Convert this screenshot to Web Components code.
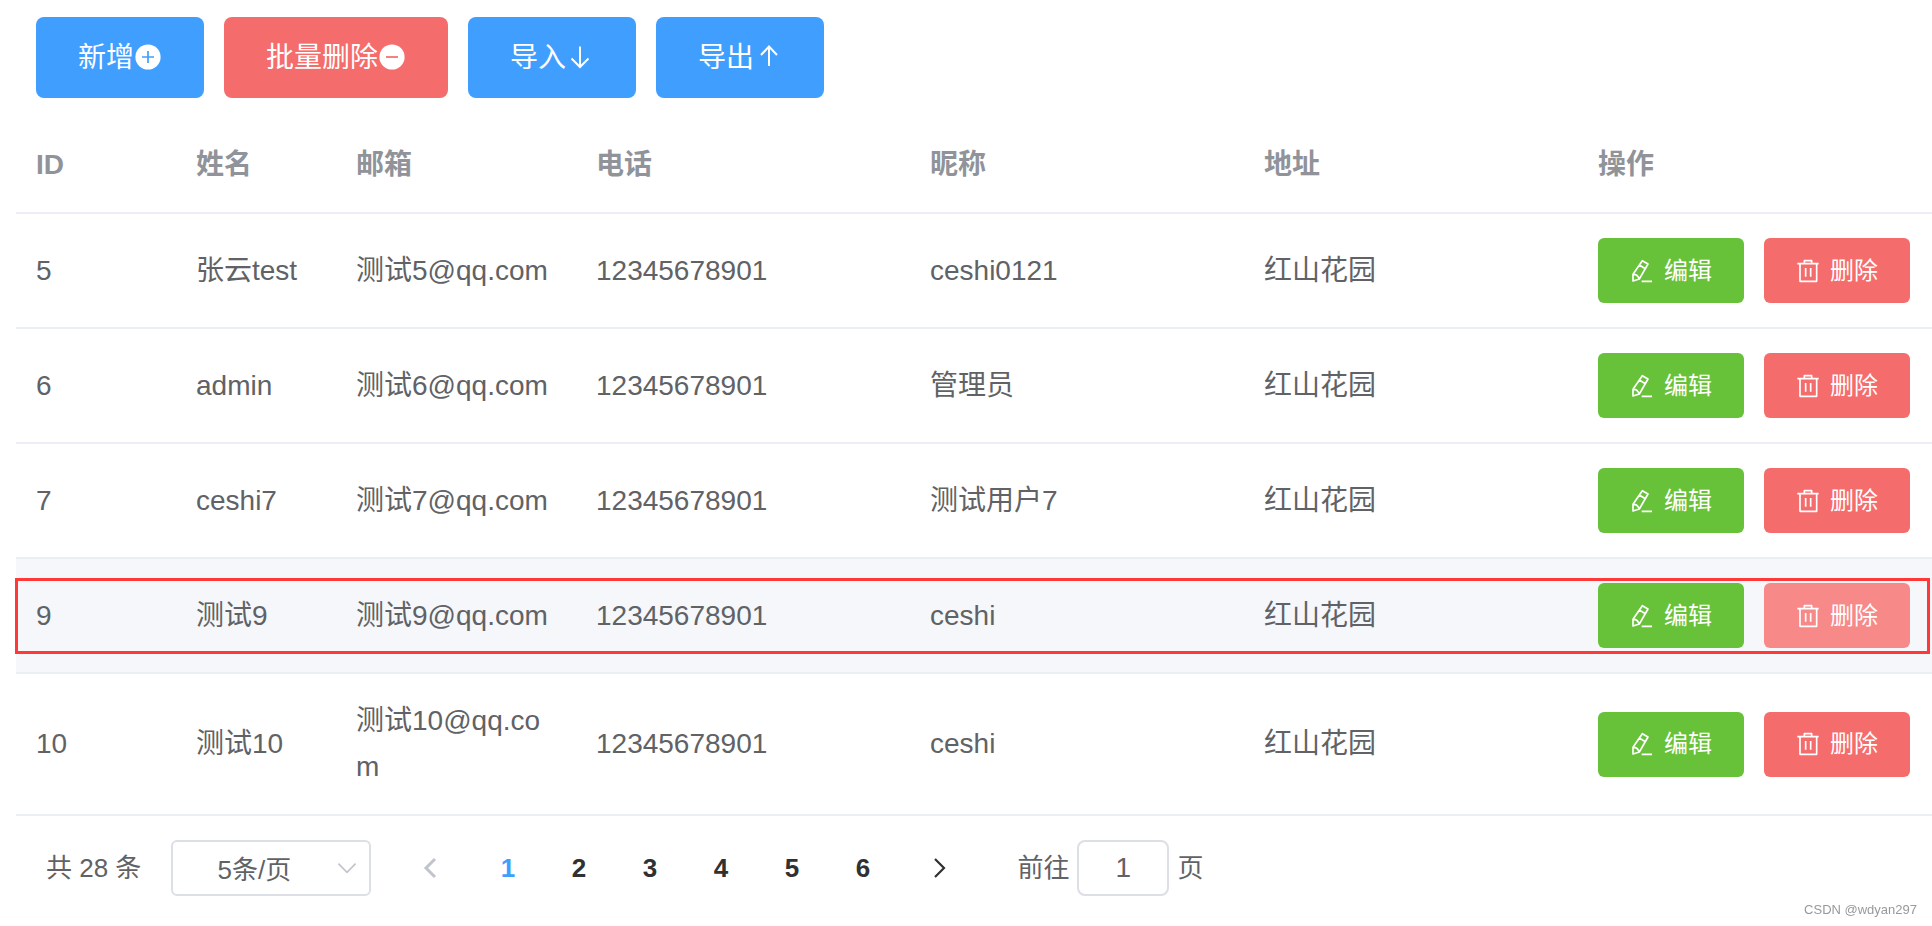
<!DOCTYPE html>
<html lang="zh-CN">
<head>
<meta charset="utf-8">
<meta name="viewport" content="width=device-width, initial-scale=1">
<title>用户管理</title>
<style>
  body {
    margin: 0;
    background: #fff;
    color: #606266;
    font-family: "Liberation Sans", "Noto Sans CJK SC", sans-serif;
    font-size: 28px;
  }
</style>
</head>
<body>
<user-page></user-page>

<script>
const icons = {
  plus: '<circle cx="14" cy="13" r="12.6" fill="currentColor"/><path d="M8 13h12M14 7v12" stroke="var(--tone)" stroke-width="1.7"/>',
  minus: '<circle cx="14" cy="13" r="12.6" fill="currentColor"/><path d="M8 13h12" stroke="var(--tone)" stroke-width="1.7"/>',
  down: '<path d="M14 2.5v21M5.5 14.5l8.5 8.5 8.5-8.5" fill="none" stroke="currentColor" stroke-width="2"/>',
  up: '<path d="M15 22V2.5M7 11l8-8.5 8 8.5" fill="none" stroke="currentColor" stroke-width="2"/>',
  edit: '<g transform="scale(.3889)" fill="none" stroke="currentColor" stroke-width="5" stroke-linejoin="round"><path d="M37 5l17 10L28 60 9 66V46zM28 18l18 11M9 46c9-1 15 4 19 14M35 67h31"/></g>',
  trash: '<g transform="scale(.3889)" fill="none" stroke="currentColor" stroke-width="5" stroke-linejoin="round"><path d="M4 14h64M25 14V5h22v9M12 14v53h50V14M29 27v26M44 27v26"/></g>',
  left: '<path d="M18 5l-9 9 9 9" fill="none" stroke="currentColor" stroke-width="3"/>',
  right: '<path d="M9 5l9 9-9 9" fill="none" stroke="currentColor" stroke-width="2.2"/>',
  chevron: '<path d="M4 9l10 10L24 9" fill="none" stroke="currentColor" stroke-width="2"/>'
};

class UiElement extends HTMLElement {
  connectedCallback() {
    if (this.shadowRoot) return;
    this.attachShadow({ mode: 'open' }).innerHTML = this.render();
  }
}

customElements.define('ui-icon', class extends UiElement {
  render() {
    return `<style>
      :host { display: block; flex: none; width: 28px; height: 28px; }
      svg { display: block; width: 100%; height: 100%; }
    </style>
    <svg viewBox="0 0 28 28" aria-hidden="true">${icons[this.getAttribute('name')]}</svg>`;
  }
});

customElements.define('ui-button', class extends UiElement {
  render() {
    return `<style>
      :host { display: block; --tone: #409eff; }
      :host([tone="danger"]) { --tone: #f56c6c; }
      :host([tone="success"]) { --tone: #67c23a; }
      :host([hovered]) { --tone: #f78989; }
      button {
        display: flex; align-items: center; height: 81px; padding: 0 42px;
        border: 0; border-radius: 8px; background: var(--tone); color: #fff;
        font: inherit; font-size: 28px; line-height: 40px; white-space: nowrap; cursor: pointer;
      }
      :host([size="small"]) button {
        gap: 10px; height: 65px; padding: 0 32px; border-radius: 6px; font-size: 24px;
      }
      ::slotted(ui-icon[slot="before"]) { width: 24px; height: 24px; }
    </style>
    <button type="button"><slot name="before"></slot><span><slot></slot></span><slot name="after"></slot></button>`;
  }
});

customElements.define('action-bar', class extends UiElement {
  render() {
    return `<style>:host { display: flex; gap: 20px; padding: 0 20px; }</style><slot></slot>`;
  }
});

const users = [
  [5, '张云test', '测试5@qq.com', '12345678901', 'ceshi0121', '红山花园'],
  [6, 'admin', '测试6@qq.com', '12345678901', '管理员', '红山花园'],
  [7, 'ceshi7', '测试7@qq.com', '12345678901', '测试用户7', '红山花园'],
  [9, '测试9', '测试9@qq.com', '12345678901', 'ceshi', '红山花园'],
  [10, '测试10', '测试10@qq.com', '12345678901', 'ceshi', '红山花园']
];
const activeId = 9;

customElements.define('user-table', class extends UiElement {
  render() {
    const head = ['ID', '姓名', '邮箱', '电话', '昵称', '地址', '操作']
      .map(t => `<th scope="col">${t}</th>`).join('');
    const rows = users.map(u => {
      const active = u[0] === activeId;
      return `<tr${active ? ' class="active"' : ''}>${u.map(v => `<td>${v}</td>`).join('')}
        <td>${active ? '<span class="frame"></span>' : ''}<div class="ops">
          <ui-button tone="success" size="small"><ui-icon slot="before" name="edit"></ui-icon>编辑</ui-button>
          <ui-button tone="danger" size="small"${active ? ' hovered' : ''}><ui-icon slot="before" name="trash"></ui-icon>删除</ui-button>
        </div></td></tr>`;
    }).join('');
    return `<style>
      :host { display: block; }
      table { width: 100%; table-layout: fixed; border-collapse: separate; border-spacing: 0; }
      .narrow { width: 160px; } .mail { width: 240px; } .action { width: 354px; }
      th, td {
        padding: 24px 20px; border-bottom: 2px solid #ebeef5;
        line-height: 46px; text-align: left; vertical-align: middle; word-break: break-all;
      }
      th { color: #909399; font-weight: bold; }
      .ops { display: flex; gap: 20px; }
      .active { position: relative; background: #f5f7fa; }
      .frame {
        position: absolute; inset: 19px 2px 20px -1px;
        border: 3px solid #ff3838; pointer-events: none;
      }
    </style>
    <table>
      <colgroup><col class="narrow"><col class="narrow"><col class="mail"><col><col><col><col class="action"></colgroup>
      <thead><tr>${head}</tr></thead>
      <tbody>${rows}</tbody>
    </table>`;
  }
});

customElements.define('page-size', class extends UiElement {
  render() {
    return `<style>
      :host { display: grid; width: 200px; align-items: center; }
      select, ui-icon { grid-area: 1 / 1; }
      select {
        appearance: none; width: 100%; height: 56px; padding: 0 50px 2px 16px;
        border: 2px solid #dcdfe6; border-radius: 6px; background: #fff; color: #606266;
        font: inherit; text-align: center; text-align-last: center;
      }
      ui-icon { justify-self: end; width: 24px; height: 24px; margin-right: 12px; color: #c0c4cc; pointer-events: none; }
    </style>
    <select aria-label="每页条数"><option>5条/页</option><option>10条/页</option><option>20条/页</option></select>
    <ui-icon name="chevron"></ui-icon>`;
  }
});

customElements.define('page-numbers', class extends UiElement {
  render() {
    const pages = [1, 2, 3, 4, 5, 6]
      .map(n => `<button type="button" class="page"${n === 1 ? ' aria-current="page"' : ''}>${n}</button>`).join('');
    return `<style>
      :host { display: block; }
      nav { display: flex; }
      button {
        display: flex; align-items: center; justify-content: center; height: 56px; padding: 0;
        border: 0; background: none; color: #303133; font: inherit; font-weight: bold; cursor: pointer;
      }
      .page { width: 71px; }
      .step { width: 83px; }
      .step:disabled { color: #c0c4cc; cursor: default; }
      [aria-current] { color: #409eff; }
    </style>
    <nav aria-label="分页">
      <button type="button" class="step" aria-label="上一页" disabled><ui-icon name="left"></ui-icon></button>
      ${pages}
      <button type="button" class="step" aria-label="下一页"><ui-icon name="right"></ui-icon></button>
    </nav>`;
  }
});

customElements.define('page-jump', class extends UiElement {
  render() {
    return `<style>
      :host { display: flex; align-items: center; gap: 8px; }
      input {
        box-sizing: border-box; width: 92px; height: 56px; padding: 0 6px;
        border: 2px solid #dcdfe6; border-radius: 8px; background: #fff; color: #606266;
        font: inherit; font-size: 28px; text-align: center;
      }
    </style>
    <label for="page">前往</label><input id="page" type="text" inputmode="numeric" value="1"><span>页</span>`;
  }
});

customElements.define('page-bar', class extends UiElement {
  render() {
    return `<style>
      :host { display: flex; align-items: center; padding: 24px 30px; font-size: 26px; line-height: 56px; white-space: nowrap; }
      page-size { margin-left: 30px; margin-right: 18px; }
      page-jump { margin-left: 36px; }
    </style>
    <span>共 28 条</span><page-size></page-size><page-numbers></page-numbers><page-jump></page-jump>`;
  }
});

customElements.define('water-mark', class extends UiElement {
  render() {
    return `<style>
      :host {
        display: block; position: fixed; right: 15px; bottom: 6px;
        color: #999; font-size: 13px; line-height: 20px;
      }
    </style><slot></slot>`;
  }
});

customElements.define('user-page', class extends UiElement {
  render() {
    return `<style>
      :host { display: block; padding: 17px 0 0 16px; }
      user-table { margin-top: 20px; }
    </style>
    <action-bar>
      <ui-button>新增<ui-icon slot="after" name="plus"></ui-icon></ui-button>
      <ui-button tone="danger">批量删除<ui-icon slot="after" name="minus"></ui-icon></ui-button>
      <ui-button>导入<ui-icon slot="after" name="down"></ui-icon></ui-button>
      <ui-button>导出<ui-icon slot="after" name="up"></ui-icon></ui-button>
    </action-bar>
    <user-table></user-table>
    <page-bar></page-bar>
    <water-mark>CSDN @wdyan297</water-mark>`;
  }
});
</script>
</body>
</html>
